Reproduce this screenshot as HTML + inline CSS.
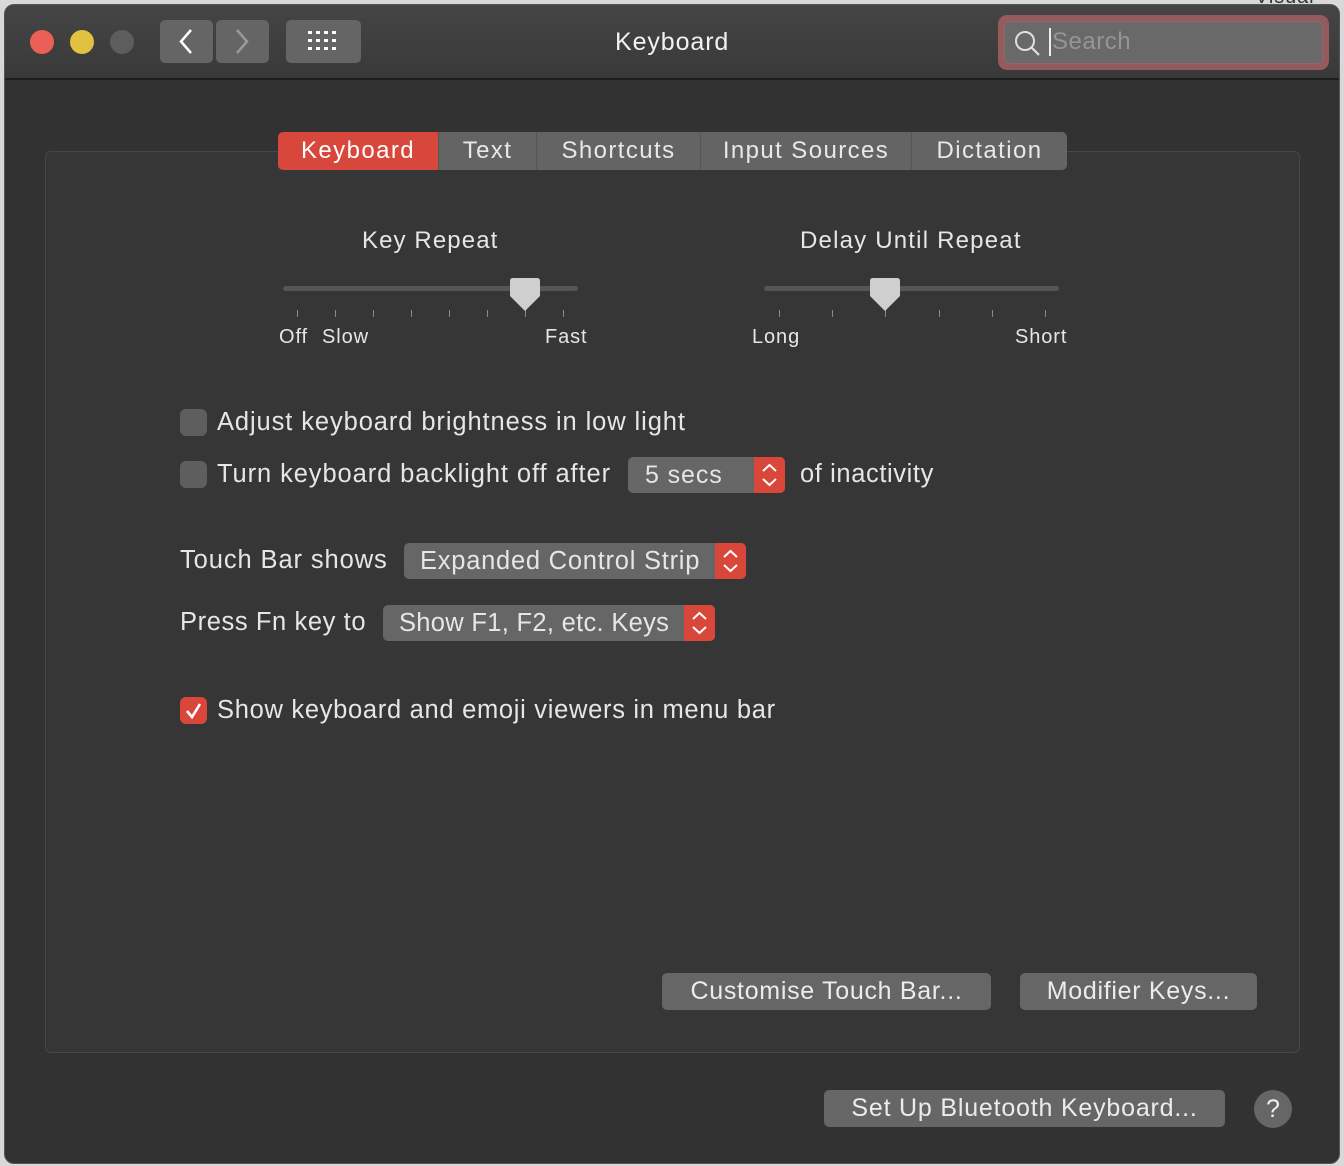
<!DOCTYPE html>
<html><head><meta charset="utf-8"><style>
*{margin:0;padding:0;box-sizing:border-box}
body{width:1344px;height:1166px;background:#d8d8d8;position:relative;overflow:hidden;font-family:"Liberation Sans",sans-serif;color:#e6e6e6;letter-spacing:0.9px}
.a{position:absolute}
.win{left:4px;top:4px;width:1336px;height:1160px;background:#323232;border-radius:10px;overflow:hidden;border:1px solid #555}
.title{left:0;top:0;width:1336px;height:75px;background:linear-gradient(#454545,#393939);border-bottom:2px solid #1e1e1e}
.btn{background:#656565;border-radius:5px}
.t{white-space:nowrap;font-size:24px;line-height:1}
.tab{top:132px;height:38px;background:#646464;border-right:1px solid #555;font-size:24px;text-align:center;line-height:38px;color:#e8e8e8;letter-spacing:1.4px}
.cb{width:27px;height:27px;border-radius:6px;background:#5e5e5e}
.pop{background:#666;border-radius:5px;height:36px}
.step{background:#d9473b;border-radius:0 5px 5px 0;height:36px;width:31px;top:0;right:0}
.tick{width:1px;height:7px;background:#8a8a8a;top:310px}
.pb{background:#666;border-radius:5px;height:37px;font-size:25px;text-align:center;line-height:37px;color:#ececec}
</style></head><body>
<div class="a" style="left:1255px;top:-14px;font-size:20px;color:#333">Visual</div>
<div class="a win">
<div class="a title"></div>
</div>
<div class="a" style="left:30px;top:30px;width:24px;height:24px;border-radius:50%;background:#ec5f57"></div>
<div class="a" style="left:70px;top:30px;width:24px;height:24px;border-radius:50%;background:#e2c140"></div>
<div class="a" style="left:110px;top:30px;width:24px;height:24px;border-radius:50%;background:#5d5d5d"></div>
<div class="a btn" style="left:160px;top:20px;width:53px;height:43px"></div>
<div class="a btn" style="left:216px;top:20px;width:53px;height:43px"></div>
<svg class="a" style="left:160px;top:20px" width="110" height="43"><path d="M31 10 L21 21.5 L31 33" stroke="#fff" stroke-width="2.5" fill="none"/><path d="M77 10 L87 21.5 L77 33" stroke="#9a9a9a" stroke-width="2.5" fill="none"/></svg>
<div class="a btn" style="left:286px;top:20px;width:75px;height:43px"></div>
<svg class="a" style="left:308px;top:31px" width="32" height="22" fill="#fff"><g><rect x="0" y="0" width="4" height="3"/><rect x="8" y="0" width="4" height="3"/><rect x="16" y="0" width="4" height="3"/><rect x="24" y="0" width="4" height="3"/><rect x="0" y="8" width="4" height="3"/><rect x="8" y="8" width="4" height="3"/><rect x="16" y="8" width="4" height="3"/><rect x="24" y="8" width="4" height="3"/><rect x="0" y="16" width="4" height="3"/><rect x="8" y="16" width="4" height="3"/><rect x="16" y="16" width="4" height="3"/><rect x="24" y="16" width="4" height="3"/></g></svg>
<div class="a t" style="left:615px;top:30px;font-size:25px;color:#f2f2f2">Keyboard</div>
<div class="a" style="left:998px;top:15px;width:331px;height:55px;border-radius:9px;background:#955a5c"></div>
<div class="a" style="left:1004px;top:21px;width:319px;height:43px;border-radius:5px;background:#696969;border:1px solid #8a6a6a"></div>
<svg class="a" style="left:1013px;top:29px" width="30" height="30"><circle cx="12" cy="12" r="9" stroke="#e0e0e0" stroke-width="2" fill="none"/><path d="M18.5 18.5 L26 26" stroke="#e0e0e0" stroke-width="2.2"/></svg>
<div class="a" style="left:1049px;top:28px;width:2px;height:28px;background:#eee"></div>
<div class="a t" style="left:1052px;top:30px;font-size:24px;color:#959595;letter-spacing:0.5px">Search</div>

<div class="a" style="left:45px;top:151px;width:1255px;height:902px;background:#363636;border:1px solid #474747;border-radius:6px"></div>
<div class="a tab" style="left:278px;width:161px;background:#d8473b;border-radius:5px 0 0 5px;color:#fff">Keyboard</div>
<div class="a tab" style="left:439px;width:98px">Text</div>
<div class="a tab" style="left:537px;width:164px">Shortcuts</div>
<div class="a tab" style="left:701px;width:211px">Input Sources</div>
<div class="a tab" style="left:912px;width:155px;border-radius:0 5px 5px 0;border-right:none">Dictation</div>

<div class="a t" style="left:362px;top:229px;letter-spacing:1.1px">Key Repeat</div>
<div class="a t" style="left:800px;top:229px;letter-spacing:1.2px">Delay Until Repeat</div>
<div class="a" style="left:283px;top:286px;width:295px;height:5px;border-radius:3px;background:#555"></div>
<div class="a" style="left:764px;top:286px;width:295px;height:5px;border-radius:3px;background:#555"></div>
<div class="a tick" style="left:297px"></div><div class="a tick" style="left:335px"></div><div class="a tick" style="left:373px"></div><div class="a tick" style="left:411px"></div><div class="a tick" style="left:449px"></div><div class="a tick" style="left:487px"></div><div class="a tick" style="left:525px"></div><div class="a tick" style="left:563px"></div>
<div class="a tick" style="left:779px"></div><div class="a tick" style="left:832px"></div><div class="a tick" style="left:885px"></div><div class="a tick" style="left:939px"></div><div class="a tick" style="left:992px"></div><div class="a tick" style="left:1045px"></div>
<svg class="a" style="left:509px;top:278px" width="32" height="36"><path d="M4 0 H28 Q31 0 31 3 V18 L16 33 L1 18 V3 Q1 0 4 0Z" fill="#cfcfcf"/></svg>
<svg class="a" style="left:869px;top:278px" width="32" height="36"><path d="M4 0 H28 Q31 0 31 3 V18 L16 33 L1 18 V3 Q1 0 4 0Z" fill="#cfcfcf"/></svg>
<div class="a t" style="left:279px;top:327px;font-size:20px">Off</div>
<div class="a t" style="left:322px;top:327px;font-size:20px">Slow</div>
<div class="a t" style="left:545px;top:327px;font-size:20px">Fast</div>
<div class="a t" style="left:752px;top:327px;font-size:20px">Long</div>
<div class="a t" style="left:1015px;top:327px;font-size:20px">Short</div>

<div class="a cb" style="left:180px;top:409px"></div>
<div class="a t" style="left:217px;top:410px;font-size:25.5px">Adjust keyboard brightness in low light</div>
<div class="a cb" style="left:180px;top:461px"></div>
<div class="a t" style="left:217px;top:462px;font-size:25.5px">Turn keyboard backlight off after</div>
<div class="a pop" style="left:628px;top:457px;width:157px"><div class="a step"></div></div>
<div class="a t" style="left:645px;top:463px;font-size:25px">5 secs</div>
<div class="a t" style="left:800px;top:462px;font-size:25.5px;letter-spacing:0.6px">of inactivity</div>

<div class="a t" style="left:180px;top:548px;font-size:25.5px">Touch Bar shows</div>
<div class="a pop" style="left:404px;top:543px;width:342px"><div class="a step"></div></div>
<div class="a t" style="left:420px;top:549px;font-size:25.5px;letter-spacing:0.75px">Expanded Control Strip</div>
<div class="a t" style="left:180px;top:610px;font-size:25.5px;letter-spacing:0.6px">Press Fn key to</div>
<div class="a pop" style="left:383px;top:605px;width:332px"><div class="a step"></div></div>
<div class="a t" style="left:399px;top:611px;font-size:25.5px;letter-spacing:0.3px">Show F1, F2, etc. Keys</div>
<svg class="a" style="left:754px;top:457px" width="31" height="36"><path d="M9 14 L15.5 8 L22 14 M9 22 L15.5 28 L22 22" stroke="#fff" stroke-width="2" fill="none"/></svg>
<svg class="a" style="left:715px;top:543px" width="31" height="36"><path d="M9 14 L15.5 8 L22 14 M9 22 L15.5 28 L22 22" stroke="#fff" stroke-width="2" fill="none"/></svg>
<svg class="a" style="left:684px;top:605px" width="31" height="36"><path d="M9 14 L15.5 8 L22 14 M9 22 L15.5 28 L22 22" stroke="#fff" stroke-width="2" fill="none"/></svg>

<div class="a cb" style="left:180px;top:697px;background:#d9473b"></div>
<svg class="a" style="left:180px;top:697px" width="27" height="27"><path d="M7 14 L12 20 L20 7" stroke="#fff" stroke-width="2.6" fill="none"/></svg>
<div class="a t" style="left:217px;top:698px;font-size:25.5px;letter-spacing:0.7px">Show keyboard and emoji viewers in menu bar</div>

<div class="a pb" style="left:662px;top:973px;width:329px;letter-spacing:0.7px">Customise Touch Bar...</div>
<div class="a pb" style="left:1020px;top:973px;width:237px;letter-spacing:0.7px">Modifier Keys...</div>
<div class="a pb" style="left:824px;top:1090px;width:401px;letter-spacing:0.8px">Set Up Bluetooth Keyboard...</div>
<div class="a" style="left:1254px;top:1090px;width:38px;height:38px;border-radius:50%;background:#666;text-align:center;line-height:38px;font-size:25px;color:#eee;letter-spacing:0">?</div>
</body></html>
